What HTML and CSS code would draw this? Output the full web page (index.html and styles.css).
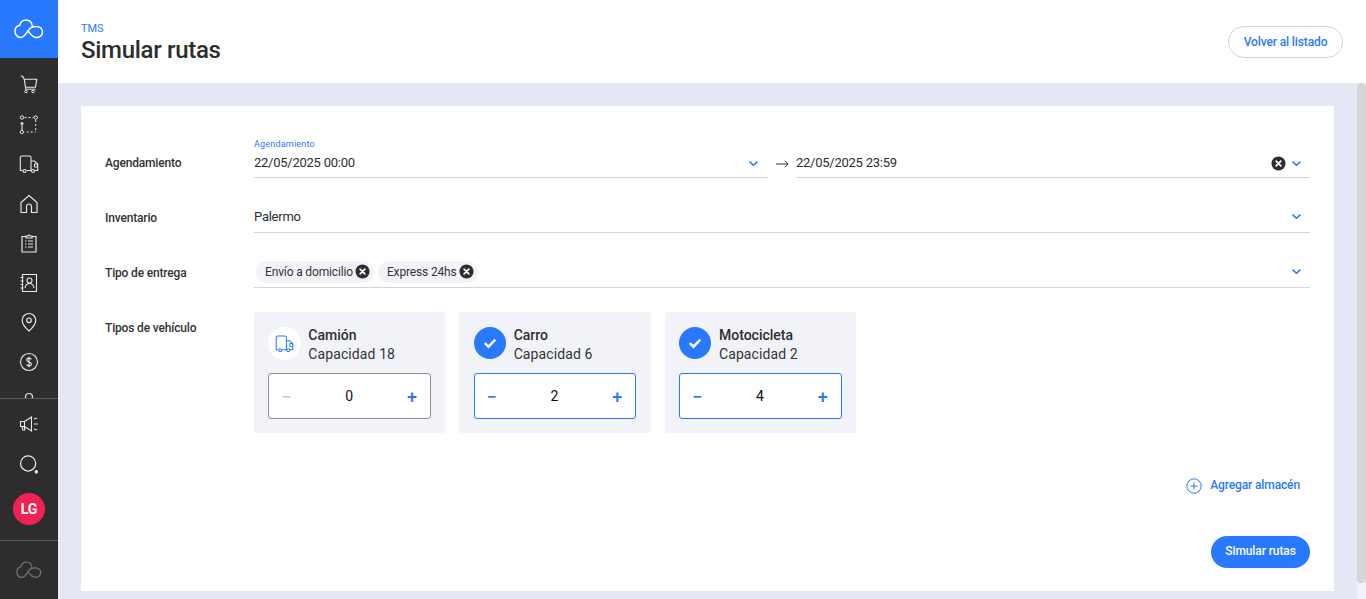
FILE: index.html
```html
<!DOCTYPE html>
<html lang="es">
<head>
<meta charset="utf-8">
<title>Simular rutas</title>
<link rel="stylesheet" href="styles.css">
</head>
<body>
<svg class="defs" width="0" height="0">
  <defs>
    <symbol id="cloud" viewBox="0 0 30 20"><path d="M5.500 6.500C2.500 7 1 9.500 1 12.300 1 15.500 3.200 18.500 6.500 18.500 11 18.500 12.500 13.500 15 10.500 17 8 19.500 7.500 22 7.500 25.500 7.500 28.500 9.500 28.500 13 28.500 16.500 25.500 18.500 22.500 18.500 18.500 18.500 16.500 15 14.500 12.500M5.500 6.500C6.500 3 9 1 12 1 15.500 1 18 3.500 18.500 7.800" fill="none" stroke="currentColor" stroke-width="1.500" stroke-linecap="round"/></symbol>
    <symbol id="truck" viewBox="0 0 20 20"><path d="M3.500 16.500H1.300V3.500a1.500 1.500 0 0 1 1.500-1.500H10.500a1.500 1.500 0 0 1 1.500 1.500v13H7.500M12 7h3.500l3.200 3v6.500h-2.800" fill="none" stroke="currentColor" stroke-width="1.100"/><circle cx="5.500" cy="17" r="1.500" fill="none" stroke="currentColor" stroke-width="1.100"/><circle cx="14" cy="17" r="1.500" fill="none" stroke="currentColor" stroke-width="1.100"/><path d="M15.500 10h3v3h-3z" fill="none" stroke="currentColor" stroke-width="1"/></symbol>
    <symbol id="chev" viewBox="0 0 12 8"><path d="M1.500 1.800 6 6l4.500-4.200" fill="none" stroke="currentColor" stroke-width="1.800"/></symbol>
    <symbol id="clear" viewBox="0 0 16 16"><circle cx="8" cy="8" r="7.500" fill="#2d2d2d"/><path d="m5.500 5.500 5 5m0-5-5 5" stroke="#fff" stroke-width="1.900" stroke-linecap="round"/></symbol>
    <symbol id="check" viewBox="0 0 32 32"><circle cx="16" cy="16" r="16" fill="#2979ff"/><path d="m10.800 16.200 3.700 3.500 6.800-7" fill="none" stroke="#fff" stroke-width="2.400"/></symbol>
  </defs>
</svg>
<div class="app">
  <aside class="sidebar">
    <div class="brand"><svg class="brand-logo"><use href="#cloud"/></svg></div>
    <nav class="nav">
      <svg class="nav-icon" viewBox="0 0 20 20"><path d="M1.700 1.200h2l1.500 3h12.600l-1.300 8H6.500L5.200 4.200" fill="none" stroke="currentColor" stroke-width="1.100"/><path d="M6.500 12.200v2h10" fill="none" stroke="currentColor" stroke-width="1"/><circle cx="7" cy="16.500" r="1.300" fill="none" stroke="currentColor"/><circle cx="14" cy="16.500" r="1.300" fill="none" stroke="currentColor"/></svg>
      <svg class="nav-icon" viewBox="0 0 20 20"><circle cx="3" cy="2.500" r="1.700" fill="none" stroke="currentColor"/><circle cx="16.700" cy="2.500" r="1.700" fill="none" stroke="currentColor"/><circle cx="2.800" cy="17" r="1.700" fill="none" stroke="currentColor"/><path d="M5.500 2.500h9M16.700 5v12h-1m-2 0h-2m-2 0H5.500" fill="none" stroke="currentColor" stroke-dasharray="2 2"/><path d="M3 15V7.500M1.600 9 3 7.500 4.400 9" fill="none" stroke="currentColor" stroke-width="1.100"/></svg>
      <svg class="nav-icon"><use href="#truck"/></svg>
      <svg class="nav-icon" viewBox="0 0 20 20"><path d="M2 8.500 10 1.500l8 7V18.500h-5.500v-6a2.500 2.500 0 0 0-5 0v6H2z" fill="none" stroke="currentColor" stroke-width="1.200"/></svg>
      <svg class="nav-icon" viewBox="0 0 20 20"><path d="M6.500 3.500H3V19h14V3.500h-3.500M7 5V3h2a1 1 0 0 1 2 0h2v2z" fill="none" stroke="currentColor" stroke-width="1.200"/><path d="M6 8h1.500M9 8h5M6 11h1.500M9 11h5M6 14h1.500M9 14h5" stroke="currentColor" stroke-width="1.200"/></svg>
      <svg class="nav-icon" viewBox="0 0 20 20"><path d="M3.500 1.500h14v17h-14zM1.500 4.500h3M1.500 8h3M1.500 11.500h3M1.500 15h3" fill="none" stroke="currentColor" stroke-width="1.100"/><circle cx="10.500" cy="7.500" r="2.500" fill="none" stroke="currentColor" stroke-width="1.100"/><path d="M6 15c.500-3 2.300-4.500 4.500-4.500S14.500 12 15 15" fill="none" stroke="currentColor" stroke-width="1.100"/></svg>
      <svg class="nav-icon" viewBox="0 0 20 20"><path d="M10 19C6 15.500 3.200 12.200 3.200 8.300a6.800 6.800 0 0 1 13.600 0C16.800 12.200 14 15.500 10 19z" fill="none" stroke="currentColor" stroke-width="1.200"/><circle cx="10" cy="8.300" r="2.300" fill="none" stroke="currentColor" stroke-width="1.200"/></svg>
      <svg class="nav-icon" viewBox="0 0 20 20"><circle cx="10" cy="10" r="8.500" fill="none" stroke="currentColor" stroke-width="1.100"/><path d="M12.300 7.500c-.300-1-1.200-1.400-2.300-1.400-1.300 0-2.300.700-2.300 1.900 0 2.600 4.700 1.400 4.700 4 0 1.200-1 1.900-2.400 1.900-1.200 0-2.100-.500-2.400-1.500M10 4.800v10.400" fill="none" stroke="currentColor" stroke-width="1.100"/></svg>
      <svg class="nav-icon" viewBox="0 0 20 20"><circle cx="10" cy="6" r="3.500" fill="none" stroke="currentColor" stroke-width="1.200"/></svg>
    </nav>
    <div class="side-tools">
      <svg class="nav-icon" viewBox="0 0 20 20"><path d="M1.500 7.500h4v5h-4zM5.500 7.500l7-4.500v14l-7-4.500M3 12.500l.800 3.500h2l-.600-3.500M15 5l3-1M15 10h4M15 15l3 1" fill="none" stroke="currentColor" stroke-width="1.100"/></svg>
      <svg class="nav-icon search-icon" viewBox="0 0 20 20"><circle cx="8.700" cy="9" r="7.200" fill="none" stroke="currentColor" stroke-width="1.200"/><circle cx="16.500" cy="17" r="1.700" fill="currentColor"/></svg>
      <div class="avatar">LG</div>
    </div>
    <div class="side-foot"><svg class="foot-logo"><use href="#cloud"/></svg></div>
  </aside>
  <div class="main">
    <header class="topbar">
      <div>
        <div class="crumb">TMS</div>
        <h1 class="title">Simular rutas</h1>
      </div>
      <button class="btn-outline">Volver al listado</button>
    </header>
    <div class="content">
      <div class="scroll-area">
        <section class="card">
          <div class="row row-first">
            <div class="label">Agendamiento</div>
            <div class="range">
              <div class="field field-date field-start">
                <span class="float-label">Agendamiento</span>
                <span class="value">22/05/2025 00:00</span>
                <svg class="chev"><use href="#chev"/></svg>
              </div>
              <svg class="arrow" viewBox="0 0 14 10"><path d="M0 5h13M9.500 1.500 13 5 9.500 8.500" fill="none" stroke="#222" stroke-width="1"/></svg>
              <div class="field field-date">
                <span class="value">22/05/2025 23:59</span>
                <svg class="clear"><use href="#clear"/></svg>
                <svg class="chev"><use href="#chev"/></svg>
              </div>
            </div>
          </div>
          <div class="row">
            <div class="label">Inventario</div>
            <div class="field"><span class="value">Palermo</span><svg class="chev"><use href="#chev"/></svg></div>
          </div>
          <div class="row">
            <div class="label">Tipo de entrega</div>
            <div class="field">
              <div class="chips">
                <span class="chip">Envío a domicilio<svg class="chip-x"><use href="#clear"/></svg></span>
                <span class="chip">Express 24hs<svg class="chip-x"><use href="#clear"/></svg></span>
              </div>
              <svg class="chev"><use href="#chev"/></svg>
            </div>
          </div>
          <div class="row row-vehicles">
            <div class="label">Tipos de vehículo</div>
            <div class="vehicles">
              <div class="vehicle">
                <div class="v-head">
                  <span class="v-circle"><svg class="v-truck"><use href="#truck"/></svg></span>
                  <div class="v-text"><div class="v-name">Camión</div><div class="v-cap">Capacidad 18</div></div>
                </div>
                <div class="stepper stepper-off"><span class="step step-off">−</span><span class="qty">0</span><span class="step">+</span></div>
              </div>
              <div class="vehicle">
                <div class="v-head">
                  <svg class="v-check"><use href="#check"/></svg>
                  <div class="v-text"><div class="v-name">Carro</div><div class="v-cap">Capacidad 6</div></div>
                </div>
                <div class="stepper"><span class="step">−</span><span class="qty">2</span><span class="step">+</span></div>
              </div>
              <div class="vehicle">
                <div class="v-head">
                  <svg class="v-check"><use href="#check"/></svg>
                  <div class="v-text"><div class="v-name">Motocicleta</div><div class="v-cap">Capacidad 2</div></div>
                </div>
                <div class="stepper"><span class="step">−</span><span class="qty">4</span><span class="step">+</span></div>
              </div>
            </div>
          </div>
          <div class="add-row">
            <svg class="add-icon" viewBox="0 0 16 16"><circle cx="8" cy="8" r="7.200" fill="none" stroke="#2979ff" stroke-width="1"/><path d="M4.500 8h7M8 4.500v7" stroke="#2979ff" stroke-width="1"/></svg>
            <span class="add-text">Agregar almacén</span>
          </div>
          <div class="submit-row"><button class="btn-primary">Simular rutas</button></div>
        </section>
      </div>
      <div class="scrollbar"><div class="thumb"></div></div>
    </div>
  </div>
</div>
</body>
</html>
```

FILE: styles.css
```css
* { box-sizing: border-box; }
html, body { margin: 0; height: 100%; overflow: hidden; }
body { font-family: Roboto, "Liberation Sans", sans-serif; color: #2d2d2d; background: #e6e9f5; }
.defs { display: block; height: 0; }
.app { display: flex; height: 599px; }

.sidebar { width: 58px; flex: none; background: #2d2d2d; color: #e8e8e8; display: flex; flex-direction: column; }
.brand { height: 58px; flex: none; background: #2979ff; display: flex; align-items: center; justify-content: center; color: #fff; }
.brand-logo { width: 30px; height: 20px; }
.nav { height: 341px; flex: none; overflow: hidden; display: flex; flex-direction: column; align-items: center; padding-top: 17px; gap: 19.500px; border-bottom: 1px solid #5c5c5c; }
.nav-icon { width: 20px; height: 20px; flex: none; display: block; }
.side-tools { display: flex; flex-direction: column; align-items: center; padding-top: 15px; gap: 20px; height: 142px; flex: none; border-bottom: 1px solid #5c5c5c; }
.search-icon { width: 21px; height: 21px; }
.avatar { width: 32px; height: 32px; border-radius: 50%; background: #ef2353; color: #fff; font-size: 14px; font-weight: 700; display: flex; align-items: center; justify-content: center; margin-top: -2px; }
.side-foot { flex: 1; display: flex; align-items: center; justify-content: center; color: #707070; }
.foot-logo { width: 26px; height: 18px; }

.main { flex: 1; min-width: 0; display: flex; flex-direction: column; }
.topbar { height: 83px; flex: none; background: #fff; display: flex; justify-content: space-between; padding: 22px 23px 0; }
.crumb { font-size: 11px; line-height: 13px; color: #2979ff; letter-spacing: -0.1px; }
.title { margin: 1px 0 0; font-size: 24px; line-height: 29px; font-weight: 500; color: #2d2d2d; letter-spacing: -0.3px; }
.btn-outline { height: 32px; width: 115px; margin-top: 4px; border: 1px solid #d5d5d8; border-radius: 16px; background: #fff; color: #2979ff; font: 500 12px Roboto, sans-serif; letter-spacing: -0.12px; padding: 0; }

.content { flex: 1; display: flex; min-height: 0; }
.scroll-area { flex: 1; padding: 23px 23px 0; min-width: 0; }
.scrollbar { width: 9px; flex: none; background: #f1f2f9; }
.thumb { height: 500px; background: #d6d6d9; border-radius: 4px; }
.card { height: 485px; background: #fff; padding: 24px 24px 0; }

.row { display: flex; }
.label { width: 149px; flex: none; font-size: 12px; font-weight: 500; color: #333; line-height: 14px; padding-top: 33px; letter-spacing: -0.17px; }
.row-first .label { padding-top: 26px; }
.field { flex: 1; min-width: 0; height: 47px; margin-top: 8px; border-bottom: 1px solid #d5d5d5; display: flex; align-items: center; position: relative; padding-top: 15px; }
.row-first .field { height: 48px; margin-top: 0; padding-top: 17px; }
.range { flex: 1; display: flex; align-items: flex-end; }
.field-date { flex: 1; }
.range .field-start { flex: none; width: 514px; }
.arrow { width: 13px; height: 10px; flex: none; margin: 0 7px 9px 8px; }
.float-label { position: absolute; left: 0; top: 9px; font-size: 9px; line-height: 11px; color: #2979ff; letter-spacing: 0.2px; }
.value { flex: 1; font-size: 13px; color: #2d2d2d; letter-spacing: -0.25px; }
.chev { width: 11px; height: 7px; color: #2979ff; flex: none; margin-right: 8px; }
.clear { width: 15px; height: 15px; flex: none; margin-right: 5px; }
.field-date .chev, .field-date .clear { margin-top: 3px; }
.field-start .chev { margin-right: 9px; }

.chips { flex: 1; display: flex; gap: 4px; padding-left: 2px; }
.chip { height: 22px; border-radius: 11px; background: #f2f3f9; font-size: 12px; letter-spacing: -0.15px; color: #333; display: inline-flex; align-items: center; padding: 0 4px 0 9px; }
.chip-x { width: 15px; height: 15px; margin-left: 2px; flex: none; }

.row-vehicles { margin-top: 24px; }
.row-vehicles .label { padding-top: 9px; }
.vehicles { display: flex; gap: 14px; }
.vehicle { width: 191.330px; height: 121px; background: #f2f3f9; border-radius: 2px; padding: 15px 14.330px 0; }
.v-head { display: flex; align-items: center; gap: 8px; height: 46px; padding-bottom: 14px; }
.v-circle { width: 33px; height: 33px; border-radius: 50%; background: #fff; display: flex; align-items: center; justify-content: center; color: #2979ff; flex: none; margin-right: -1px; }
.v-truck { width: 19px; height: 19px; }
.v-check { width: 32px; height: 32px; flex: none; }
.v-text { margin-top: 4px; }
.v-name { font-size: 14px; font-weight: 500; line-height: 19px; color: #2d2d2d; }
.v-cap { font-size: 14px; line-height: 19px; color: #333; letter-spacing: 0.1px; }
.stepper { height: 46px; border: 1px solid #2979ff; border-radius: 3px; background: #fff; display: flex; align-items: center; justify-content: space-between; padding: 0 12px 0 11px; }
.stepper-off { border-color: #8f8f8f; }
.step { font-size: 18px; font-weight: 500; color: #2979ff; width: 12px; text-align: center; }
.step-off { color: #cfcfcf; }
.qty { font-size: 14px; color: #111; }

.add-row { display: flex; align-items: center; justify-content: flex-end; gap: 8px; margin-top: 42px; padding-right: 10px; height: 20px; }
.add-icon { width: 16px; height: 16px; margin-top: 2px; }
.add-text { font-size: 12px; font-weight: 500; color: #2979ff; letter-spacing: -0.12px; }
.submit-row { display: flex; justify-content: flex-end; margin-top: 41px; }
.btn-primary { width: 99px; height: 32px; border: 0; border-radius: 16px; background: #2979ff; color: #fff; font: 500 12px Roboto, sans-serif; letter-spacing: -0.1px; padding: 0 0 2px; }
```
